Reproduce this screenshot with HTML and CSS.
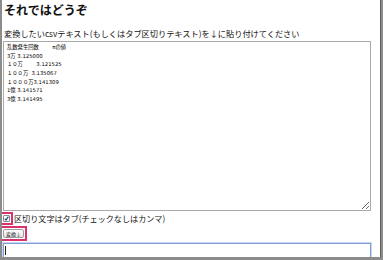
FILE: index.html
```html
<!DOCTYPE html>
<html lang="ja">
<head>
<meta charset="utf-8">
<title>csv変換</title>
<link rel="stylesheet" href="styles.css">
</head>
<body>
<div class="frame">
  <h1 class="title">それではどうぞ</h1>
  <p class="lead">変換したいcsvテキスト(もしくはタブ区切りテキスト)を↓に貼り付けてください</p>
  <textarea class="src">乱数発生回数        πの値
3万 3.125000
１０万        3.121525
１００万  3.135067
１０００万3.141309
1億 3.141571
3億 3.141495</textarea>
  <div class="opt">
    <span class="hl hl-check"><input class="check" type="checkbox" checked id="tab"></span>
    <label class="opt-label" for="tab">区切り文字はタブ(チェックなしはカンマ)</label>
  </div>
  <div class="btnrow">
    <span class="hl hl-btn"><button class="btn" type="button">変換↓</button></span>
  </div>
  <div class="out"><span class="caret"></span></div>
</div>
</body>
</html>
```
FILE: styles.css
```css
html {
  background: #8c8c8c;
}
body {
  margin: 0;
  font-family: "Noto Sans CJK JP", "Liberation Sans", sans-serif;
  color: #111;
}
.frame {
  margin-left: 2px;
  width: 378px;
  height: 257px;
  background: #fff;
  border-right: 1px solid #5e5e5e;
  overflow: hidden;
}
.title {
  margin: 0;
  padding: 2px 0 0 2px;
  font-size: 12px;
  line-height: 16px;
  font-weight: 700;
}
.lead {
  margin: 9px 0 0 2px;
  font-size: 8.2px;
  line-height: 12px;
}
.src {
  display: block;
  box-sizing: border-box;
  margin: 2px 0 0 1px;
  width: 368px;
  height: 170px;
  border: 1px solid #a9a9a9;
  padding: 1px 2px 0 3px;
  font-family: "DejaVu Sans", "Noto Sans CJK JP", sans-serif;
  font-size: 5.3px;
  line-height: 8.67px;
  color: #000;
  resize: both;
  outline: none;
}
.opt {
  display: flex;
  align-items: center;
  margin-top: 1px;
  height: 13px;
}
.hl {
  display: flex;
  align-items: center;
  justify-content: center;
  box-sizing: border-box;
  border: 2px solid #d8336c;
  margin-left: -2px;
}
.hl-check {
  width: 13px;
  height: 13px;
}
.check {
  appearance: none;
  -webkit-appearance: none;
  margin: 0;
  width: 7px;
  height: 7px;
  border: 1px solid #8a8a8a;
  border-radius: 1px;
  background: #fff url("data:image/svg+xml;utf8,<svg xmlns='http://www.w3.org/2000/svg' viewBox='0 0 10 10'><path d='M1.5 5.2 L4 8 L8.8 1.2' fill='none' stroke='%231d3a7a' stroke-width='2.2'/></svg>") center / 100% no-repeat;
}
.opt-label {
  margin-left: 1px;
  font-size: 8.1px;
  line-height: 12px;
}
.btnrow {
  display: flex;
  margin-top: 1px;
}
.hl-btn {
  width: 27px;
  height: 15px;
}
.btn {
  margin: 0;
  padding: 0 2px;
  height: 9px;
  width: 21px;
  border: 1px solid #9d9d9d;
  border-radius: 2px;
  background: linear-gradient(#fdfdfd, #e4e4e4);
  font-family: "Noto Sans CJK JP", sans-serif;
  font-size: 5px;
  line-height: 7px;
  color: #222;
}
.out {
  box-sizing: border-box;
  margin: 2px 0 0 1px;
  width: 368px;
  height: 30px;
  border: 1px solid #7d9fd4;
  box-shadow: 0 0 0 1px #c7d6ee;
  padding: 2px 0 0 1px;
}
.caret {
  display: block;
  width: 1px;
  height: 9px;
  background: #222;
}
```
